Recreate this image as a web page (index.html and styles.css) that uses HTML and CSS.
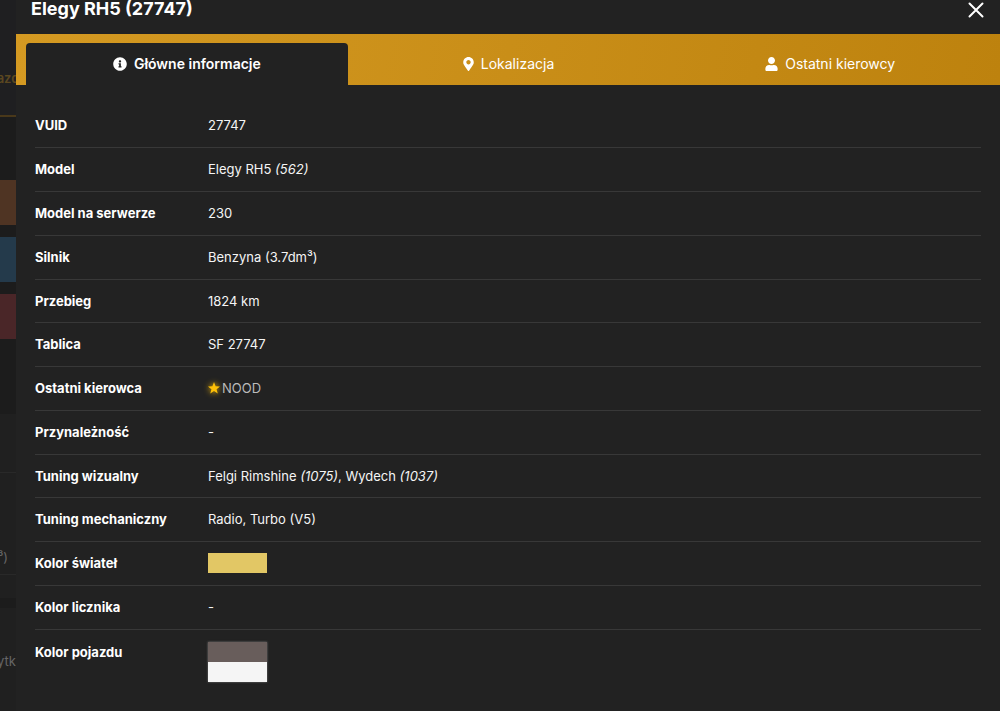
FILE: index.html
```html
<!DOCTYPE html>
<html lang="pl">
<head>
    <meta charset="UTF-8">
    <meta name="viewport" content="width=device-width, initial-scale=1.0">
    <title>Elegy RH5 (27747)</title>
    <link rel="stylesheet" href="styles.css">
</head>
<body>
    <div class="page">
        <div class="backdrop">
            <div class="backdrop-head"><span>azd</span></div>
            <div class="backdrop-actions">
                <div class="action action-edit"></div>
                <div class="action action-info"></div>
                <div class="action action-delete"></div>
            </div>
            <div class="backdrop-row row-short"></div>
            <div class="backdrop-row row-engine"><span>³)</span></div>
            <div class="backdrop-row row-gap"></div>
            <div class="backdrop-row row-user"><span>ytk</span></div>
        </div>

        <main class="modal">
            <header class="modal-header">
                <h1>Elegy RH5 (27747)</h1>
                <button class="close-btn" type="button" aria-label="Zamknij">
                    <svg width="16" height="16" viewBox="0 0 16 16"><path d="M1.500 1.500l13 13M14.500 1.500l-13 13"/></svg>
                </button>
            </header>

            <nav class="tabs">
                <button class="tab active" type="button">
                    <svg width="14" height="14" viewBox="0 0 512 512"><path d="M256 8C119 8 8 119 8 256s111 248 248 248 248-111 248-248S393 8 256 8zm0 110c23 0 42 19 42 42s-19 42-42 42-42-19-42-42 19-42 42-42zm56 254c0 7-5 12-12 12h-88c-7 0-12-5-12-12v-24c0-7 5-12 12-12h12v-64h-12c-7 0-12-5-12-12v-24c0-7 5-12 12-12h64c7 0 12 5 12 12v100h12c7 0 12 5 12 12v24z"/></svg>
                    Główne informacje
                </button>
                <button class="tab" type="button">
                    <svg width="11" height="14" viewBox="0 0 384 512"><path d="M172 502C27 291 0 270 0 192 0 86 86 0 192 0s192 86 192 192c0 78-27 99-172 310-10 13-30 13-40 0zm20-230c44 0 80-36 80-80s-36-80-80-80-80 36-80 80 36 80 80 80z"/></svg>
                    Lokalizacja
                </button>
                <button class="tab" type="button">
                    <svg width="13" height="14" viewBox="0 0 448 512"><path d="M224 256c71 0 128-57 128-128S295 0 224 0 96 57 96 128s57 128 128 128zm90 32h-17c-22 10-47 16-73 16s-51-6-73-16h-17C60 288 0 348 0 422v42c0 27 21 48 48 48h352c27 0 48-21 48-48v-42c0-74-60-134-134-134z"/></svg>
                    Ostatni kierowcy
                </button>
            </nav>

            <section class="tab-content">
                <table class="info-table">
                    <tbody>
                        <tr><th scope="row">VUID</th><td>27747</td></tr>
                        <tr><th scope="row">Model</th><td>Elegy RH5 <em>(562)</em></td></tr>
                        <tr><th scope="row">Model na serwerze</th><td>230</td></tr>
                        <tr><th scope="row">Silnik</th><td>Benzyna (3.7dm³)</td></tr>
                        <tr><th scope="row">Przebieg</th><td>1824 km</td></tr>
                        <tr><th scope="row">Tablica</th><td>SF 27747</td></tr>
                        <tr>
                            <th scope="row">Ostatni kierowca</th>
                            <td>
                                <a class="driver" href="#">
                                    <svg width="12" height="12" viewBox="0 0 24 24"><path d="M12 0l3.200 8.600 8.800.300-6.900 5.500 2.400 8.600-7.500-5L4.500 23l2.400-8.600L0 8.900l8.800-.3z"/></svg>
                                    NOOD
                                </a>
                            </td>
                        </tr>
                        <tr><th scope="row">Przynależność</th><td>-</td></tr>
                        <tr><th scope="row">Tuning wizualny</th><td>Felgi Rimshine <em>(1075)</em>, Wydech <em>(1037)</em></td></tr>
                        <tr><th scope="row">Tuning mechaniczny</th><td>Radio, Turbo (V5)</td></tr>
                        <tr><th scope="row">Kolor świateł</th><td><div class="color color-lights"></div></td></tr>
                        <tr><th scope="row">Kolor licznika</th><td>-</td></tr>
                        <tr>
                            <th scope="row">Kolor pojazdu</th>
                            <td>
                                <div class="color-group">
                                    <div class="color color-primary"></div>
                                    <div class="color color-secondary"></div>
                                </div>
                            </td>
                        </tr>
                    </tbody>
                </table>
            </section>
        </main>
    </div>
</body>
</html>
```
FILE: styles.css
```css
* {
    margin: 0;
    padding: 0;
    box-sizing: border-box;
}

body {
    font-family: Inter, "Open Sans", sans-serif;
    font-size: 13px;
    line-height: 20px;
    color: #f5f5f5;
    background-color: #222;
    overflow: hidden;
}

button {
    font: inherit;
    color: inherit;
    background: none;
    border: none;
    cursor: pointer;
}

.page {
    display: grid;
    grid-template-columns: 16px 1fr;
    min-height: 100vh;
}

/* Przyciemniona strona pod oknem */
.backdrop {
    display: flex;
    flex-direction: column;
    overflow: hidden;
    background-color: #202020;
    color: #666;
}

.backdrop span {
    display: flex;
    justify-content: flex-end;
}

.backdrop-head {
    height: 117px;
    padding-top: 68px;
    background-color: #1f1f21;
    border-bottom: 2px solid #49381a;
    color: #5b4720;
    font-weight: 600;
}

.backdrop-head span {
    justify-content: center;
}

.backdrop-actions {
    display: flex;
    flex-direction: column;
    gap: 12px;
    height: 297px;
    padding-top: 63px;
    background-color: #1c1c1c;
}

.action {
    height: 45px;
}

.action-edit {
    background-color: #4f3423;
}

.action-info {
    background-color: #243a4b;
}

.action-delete {
    background-color: #4a2628;
}

.backdrop-row {
    border-bottom: 1px solid #292929;
}

.row-short {
    height: 59px;
}

.row-engine {
    height: 102px;
    padding: 74px 8px 0 0;
}

.row-gap {
    height: 33px;
    border-bottom: 10px solid #1c1c1c;
}

.row-user {
    flex: 1;
    padding-top: 43px;
    border-bottom: none;
}

/* Okno pojazdu */
.modal {
    background-color: #222;
    min-width: 0;
}

.modal-header {
    display: flex;
    justify-content: space-between;
    align-items: flex-start;
    height: 34px;
    padding: 0 16px 0 15px;
}

h1 {
    font-size: 18px;
    line-height: 18px;
    font-weight: 700;
    color: #fff;
}

.close-btn {
    display: flex;
    padding-top: 2px;
}

.close-btn svg {
    fill: none;
    stroke: #fff;
    stroke-width: 2;
    stroke-linecap: round;
}

.tabs {
    display: flex;
    height: 51px;
    padding: 9px 9px 0 10px;
    background: linear-gradient(100deg, #d59a22, #bd820e);
}

.tab {
    flex: 1;
    display: flex;
    justify-content: center;
    align-items: center;
    gap: 7px;
    border-radius: 4px 4px 0 0;
    font-size: 14px;
    color: #fff;
}

.tab.active {
    background-color: #222;
    font-weight: 600;
}

.tab svg {
    fill: currentColor;
}

.tab-content {
    padding: 19px 19px 0;
}

.info-table {
    width: 100%;
    border-collapse: separate;
    border-spacing: 0;
}

.info-table tr {
    height: 44px;
}

.info-table tr:nth-child(4n + 5) {
    height: 43px;
}

.info-table th,
.info-table td {
    padding-bottom: 1px;
    border-bottom: 1px solid #383838;
    text-align: left;
    vertical-align: middle;
}

.info-table th {
    width: 173px;
    font-weight: 700;
    color: #fff;
}

.info-table tr:last-child th,
.info-table tr:last-child td {
    padding-top: 12px;
    border-bottom: none;
    vertical-align: top;
}

.driver {
    display: flex;
    align-items: center;
    gap: 2px;
    color: #bbb;
    text-decoration: none;
}

.driver svg {
    fill: #ffc107;
    filter: drop-shadow(0 0 3px #ffc107);
}

.color {
    width: 59px;
    height: 20px;
}

.color-group {
    width: 59px;
    box-shadow: 0 0 2px #777;
}

.color-lights {
    background-color: #e2c765;
}

.color-primary {
    background-color: #685d5b;
}

.color-secondary {
    background-color: #f5f5f5;
}
```
